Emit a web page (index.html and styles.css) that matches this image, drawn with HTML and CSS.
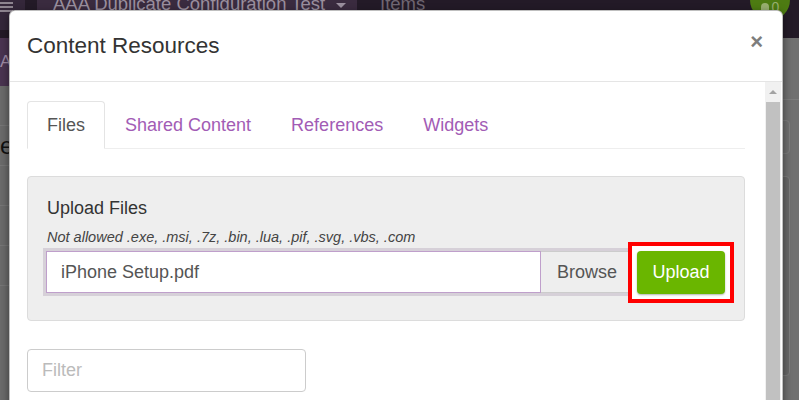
FILE: index.html
```html
<!DOCTYPE html>
<html lang="en">
<head>
    <meta charset="UTF-8">
    <meta name="viewport" content="width=device-width, initial-scale=1.0">
    <title>Content Resources</title>
    <link rel="stylesheet" href="styles.css">
</head>
<body>
    <div class="page">
        <div class="navbar">
            <div class="burger"><span></span><span></span><span></span></div>
            <div class="brand"><span class="brand-text">AAA Duplicate Configuration Test <span class="caret"></span></span></div>
            <div class="nav-link"><span class="brand-text">Items</span></div>
            <div class="badge"><span class="bell"></span><span class="badge-count">0</span></div>
        </div>
        <div class="page-body">
            <div class="side">
                <div class="side-tab">A</div>
                <div class="side-row"></div>
                <div class="side-heading">e</div>
                <div class="side-row"></div>
                <div class="side-row"></div>
                <div class="side-row"></div>
            </div>
            <div class="page-main">
                <div class="main-line"></div>
                <div class="main-card"></div>
                <div class="main-card tall"></div>
            </div>
        </div>
    </div>

    <div class="modal">
        <div class="modal-header">
            <h4 class="modal-title">Content Resources</h4>
            <button class="close">&times;</button>
        </div>
        <div class="modal-body">
            <div class="body-content">
                <ul class="tabs">
                    <li><a href="#" class="active">Files</a></li>
                    <li><a href="#">Shared Content</a></li>
                    <li><a href="#">References</a></li>
                    <li><a href="#">Widgets</a></li>
                </ul>

                <div class="well">
                    <div class="well-title">Upload Files</div>
                    <div class="note">Not allowed .exe, .msi, .7z, .bin, .lua, .pif, .svg, .vbs, .com</div>
                    <div class="upload-row">
                        <div class="file-picker">
                            <div class="file-name">iPhone Setup.pdf</div>
                            <div class="browse">Browse</div>
                        </div>
                        <div class="highlight">
                            <button class="upload-btn">Upload</button>
                        </div>
                    </div>
                </div>

                <input class="filter" type="text" placeholder="Filter">
            </div>
            <div class="scrollbar">
                <div class="scroll-up"><span class="arrow"></span></div>
                <div class="scroll-thumb"></div>
            </div>
        </div>
    </div>
</body>
</html>
```

FILE: styles.css
```css
* {
    box-sizing: border-box;
}

body {
    margin: 0;
    font-family: "Liberation Sans", Arial, Helvetica, sans-serif;
    background-color: #6b6b6b;
    height: 400px;
    overflow: hidden;
}

/* page behind the dialog (already dimmed) */
.navbar {
    height: 38px;
    background-color: #231a27;
    display: flex;
    align-items: flex-start;
}
.burger {
    width: 25px;
    height: 30px;
    background-color: #34273a;
    padding-top: 2px;
    display: flex;
    flex-direction: column;
    gap: 2px;
}
.burger span {
    display: block;
    width: 13px;
    height: 2px;
    background-color: #8d848f;
}
.brand {
    margin-left: 12px;
    width: 320px;
    height: 30px;
    background-color: #3a2b3f;
    color: #9a8f9e;
    font-size: 18.5px;
    line-height: 18px;
    padding-left: 16px;
    white-space: nowrap;
}
.brand-text {
    display: block;
    margin-top: -5px;
}
.caret {
    display: inline-block;
    margin-left: 6px;
    border-left: 5px solid transparent;
    border-right: 5px solid transparent;
    border-top: 5px solid #9a8f9e;
    vertical-align: middle;
}
.nav-link {
    margin-left: 23px;
    color: #6f6672;
    font-size: 18.5px;
    line-height: 18px;
}
.badge {
    margin-left: auto;
    margin-right: 9px;
    margin-top: -20px;
    width: 40px;
    height: 40px;
    border-radius: 50%;
    background-color: #4d7b12;
    display: flex;
    align-items: flex-end;
    justify-content: center;
    gap: 3px;
    padding-bottom: 6px;
    color: #98b070;
    font-size: 14px;
    line-height: 14px;
}
.bell {
    width: 8px;
    height: 11px;
    border-radius: 4px 4px 1px 1px;
    background-color: #98b070;
}

.page-body {
    display: flex;
    height: 362px;
}
.side {
    width: 9px;
    overflow: hidden;
}
.side-tab {
    height: 48px;
    background-color: #4a3451;
    color: #a08ca6;
    font-size: 17px;
    line-height: 48px;
}
.side-row {
    height: 40px;
    border-bottom: 1px solid #767676;
}
.side-heading {
    height: 40px;
    color: #111;
    font-size: 24px;
    line-height: 40px;
    border-bottom: 1px solid #767676;
}
.page-main {
    flex-grow: 1;
    display: flex;
    flex-direction: column;
    align-items: flex-end;
    background-color: #707070;
}
.main-line {
    width: 100%;
    height: 62px;
    border-bottom: 1px solid #7c7c7c;
}
.main-card {
    width: 30px;
    height: 34px;
    margin-top: 20px;
    margin-right: 9px;
    border: 1px solid #7e7e7e;
    border-radius: 4px;
}
.main-card.tall {
    height: 200px;
    margin-top: 22px;
    background-color: #686868;
}

/* dialog */
.modal {
    position: absolute;
    left: 9px;
    top: 10px;
    width: 774px;
    height: 420px;
    background-color: #fff;
    border: 1px solid rgba(0, 0, 0, 0.25);
    border-radius: 6px;
    box-shadow: 0 3px 9px rgba(0, 0, 0, 0.5);
    display: flex;
    flex-direction: column;
}
.modal-header {
    height: 71px;
    flex-shrink: 0;
    border-bottom: 1px solid #e5e5e5;
    display: flex;
    align-items: center;
    justify-content: space-between;
    padding: 0 19px 0 17px;
}
.modal-title {
    margin: 0;
    font-size: 22.5px;
    font-weight: normal;
    color: #333;
}
.close {
    margin-top: -9px;
    padding: 0;
    border: none;
    background: none;
    font-family: inherit;
    font-size: 22px;
    font-weight: bold;
    line-height: 1;
    color: #7d7d7d;
    cursor: pointer;
}

.modal-body {
    flex-grow: 1;
    display: flex;
}
.body-content {
    flex-grow: 1;
    padding: 19px 20px 0 17px;
}
.scrollbar {
    width: 16px;
    margin-right: 1px;
    background-color: #f1f1f1;
    display: flex;
    flex-direction: column;
}
.scroll-up {
    height: 20px;
    display: flex;
    align-items: center;
    justify-content: center;
}
.arrow {
    border-left: 4px solid transparent;
    border-right: 4px solid transparent;
    border-bottom: 4px solid #a3a3a3;
    margin-top: -1px;
}
.scroll-thumb {
    flex-grow: 1;
    margin: 0 1px;
    background-color: #c1c1c1;
}

.tabs {
    list-style: none;
    margin: 0;
    padding: 0;
    display: flex;
    border-bottom: 1px solid #eee;
}
.tabs li {
    margin-bottom: -1px;
}
.tabs a {
    display: block;
    padding: 13px 19px;
    font-size: 18px;
    line-height: 20px;
    color: #a25cb5;
    text-decoration: none;
    border: 1px solid transparent;
    border-radius: 4px 4px 0 0;
}
.tabs a.active {
    color: #555;
    background-color: #fff;
    border-color: #e4e4e4 #e4e4e4 transparent;
}

.well {
    margin-top: 27px;
    background-color: #eee;
    border: 1px solid #dcdcdc;
    border-radius: 4px;
    padding: 21px 19px 27px;
}
.well-title {
    font-size: 18px;
    line-height: 20px;
    color: #333;
}
.note {
    margin-top: 10px;
    font-size: 14.5px;
    line-height: 18px;
    font-style: italic;
    color: #444;
}
.upload-row {
    margin-top: 5px;
    display: flex;
    height: 42px;
}
.file-picker {
    flex-grow: 1;
    display: flex;
    margin-left: -1px;
    box-shadow: 0 0 0 3px #d6d0d8;
}
.file-name {
    flex-grow: 1;
    background-color: #fff;
    border: 1px solid #bf9fcb;
    padding: 0 14px;
    font-size: 18px;
    line-height: 40px;
    color: #555;
}
.browse {
    background-color: #eee;
    border: 1px solid #ccc;
    border-left: none;
    padding: 0 14px 0 16px;
    font-size: 18px;
    line-height: 40px;
    color: #555;
}
/* red annotation box round the button */
.highlight {
    flex-shrink: 0;
    width: 106px;
    height: 61px;
    margin: -9px -9px 0 -4px;
    padding: 5px;
    border: 4px solid #f00;
    background-color: #fff;
    display: flex;
}
.upload-btn {
    flex-grow: 1;
    border: none;
    border-radius: 4px;
    background-color: #6ab600;
    color: #fff;
    font-family: inherit;
    font-size: 18px;
    cursor: pointer;
    box-shadow: 0 1px 2px rgba(0, 0, 0, 0.3);
}

.filter {
    display: block;
    margin-top: 28px;
    width: 279px;
    height: 43px;
    border: 1px solid #ccc;
    border-radius: 4px;
    padding: 0 14px;
    font-family: inherit;
    font-size: 18px;
    color: #555;
}
.filter::placeholder {
    color: #bbb;
}
```
